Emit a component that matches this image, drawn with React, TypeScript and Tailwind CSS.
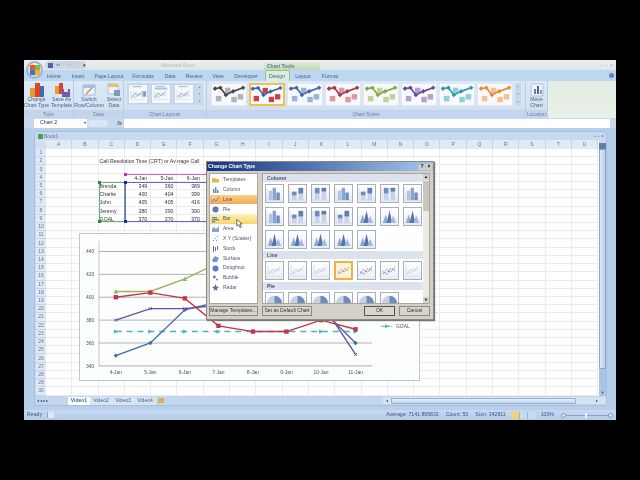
import React from "react"

const font = "font-['Liberation_Sans',Arial,sans-serif]"
const columns = "ABCDEFGHIJKLMNOPQRSTU".split("")
const rows = Array.from({ length: 30 }, (_, i) => i + 1)

const cells: Record<string, { text: string; right?: boolean }> = {
    C2: { text: "Call Resolution Time (CRT) or Average Call" },
    D4: { text: "4-Jan", right: true },
    E4: { text: "5-Jan", right: true },
    F4: { text: "6-Jan", right: true },
    C5: { text: "Brenda" },
    D5: { text: "349", right: true },
    E5: { text: "360", right: true },
    F5: { text: "389", right: true },
    C6: { text: "Charlie" },
    D6: { text: "400", right: true },
    E6: { text: "404", right: true },
    F6: { text: "399", right: true },
    C7: { text: "John" },
    D7: { text: "405", right: true },
    E7: { text: "405", right: true },
    F7: { text: "416", right: true },
    C8: { text: "Jeremy" },
    D8: { text: "380", right: true },
    E8: { text: "390", right: true },
    F8: { text: "390", right: true },
    C9: { text: "GOAL" },
    D9: { text: "370", right: true },
    E9: { text: "370", right: true },
    F9: { text: "370", right: true },
}

const tabs = [
    ["Home", 54],
    ["Insert", 78],
    ["Page Layout", 109],
    ["Formulas", 143],
    ["Data", 170],
    ["Review", 194],
    ["View", 218],
    ["Developer", 246],
    ["Design", 277],
    ["Layout", 303],
    ["Format", 330],
] as const

const styleThumbs = [
    { line: "#4a4a4a", box: "#b4b4b4" },
    { line: "#3566a8", box: "#c8404a" },
    { line: "#4668a8", box: "#9fb2dc" },
    { line: "#a83a44", box: "#dc9aa0" },
    { line: "#8aa548", box: "#c2d09c" },
    { line: "#6a4a94", box: "#b4a2cc" },
    { line: "#2f9aae", box: "#92cfdc" },
    { line: "#e88a34", box: "#f6bf96" },
]

const chartTypes = [
    "Templates",
    "Column",
    "Line",
    "Pie",
    "Bar",
    "Area",
    "X Y (Scatter)",
    "Stock",
    "Surface",
    "Doughnut",
    "Bubble",
    "Radar",
]

const xs = [114, 149, 184, 218, 253, 287, 322, 357]
const y = (v: number) => 366.7 - ((v - 340) / 20) * 23.2

const series = [
    { color: "#3f6fb0", values: [349, 360, 389, 396, 405, 400, 390, 360], shape: "diamond" },
    { color: "#9cb45a", values: [405, 405, 416, 430, 440, 445, 440, 430], shape: "triangle" },
    { color: "#6f4b9c", values: [380, 390, 390, 393, 410, 405, 396, 350], shape: "x" },
    { color: "#c4344a", values: [400, 404, 399, 375, 370, 370, 380, 372], shape: "square" },
]

const Marker = ({ x, y, color, shape }: { x: number; y: number; color: string; shape: string }) => {
    if (shape === "square") return <rect x={x - 2.2} y={y - 2.2} width={4.4} height={4.4} fill={color} />
    if (shape === "triangle") return <polygon points={`${x},${y - 2.4} ${x + 2.4},${y + 2} ${x - 2.4},${y + 2}`} fill={color} />
    if (shape === "diamond") return <polygon points={`${x},${y - 2.2} ${x + 2.2},${y} ${x},${y + 2.2} ${x - 2.2},${y}`} fill={color} />
    return <path d={`M${x - 1.5} ${y - 1.5}L${x + 1.5} ${y + 1.5}M${x + 1.5} ${y - 1.5}L${x - 1.5} ${y + 1.5}`} stroke={color} strokeWidth={1} />
}

const StyleThumb = ({ line, box, selected }: { line: string; box: string; selected?: boolean }) => (
    <div
        className={`flex h-[23px] w-[36px] shrink-0 items-center justify-center bg-[#f7f9fc] ${selected ? "border-2 border-[#f0c050]" : "border border-[#dfe8f3]"}`}
    >
        <svg viewBox="0 0 36 22" className="h-[20px] w-[33px]">
            {[[6, 14], [16, 5], [23, 15], [30, 12]].map(([x, b]) => (
                <rect key={x} x={x - 3} y={b - 2} width={6} height={6} fill={box} />
            ))}
            <polyline points="2,4 8,3 14,11 22,7 33,3" fill="none" stroke={line} strokeWidth={1.8} />
            {[[2, 4], [8, 3], [14, 11], [22, 7], [33, 3]].map(([x, b]) => (
                <polygon key={x} points={`${x},${b - 2.5} ${x + 2.5},${b} ${x},${b + 2.5} ${x - 2.5},${b}`} fill={line} />
            ))}
        </svg>
    </div>
)

const LayoutThumb = ({ variant }: { variant: number }) => (
    <div className="flex h-[20px] w-[20px] shrink-0 items-center justify-center border border-[#c4d3e6] bg-[#f4f7fb]">
        <svg viewBox="0 0 20 20" className="h-[18px] w-[18px]">
            <rect x={4} y={1} width={10} height={1.5} fill="#b8c4d4" />
            {variant === 0 && <rect x={15} y={7} width={4} height={6} fill="#7c9ac8" />}
            {variant === 1 && <rect x={3} y={3} width={14} height={2} fill="#aebfd8" />}
            <path d="M2 6V16H17M2 9H17M2 12H17" fill="none" stroke="#d3d9e0" strokeWidth={0.6} />
            <polyline points="3,14 7,9 10,12 15,7" fill="none" stroke="#7f8fa8" strokeWidth={0.8} />
            <polyline points="3,12 7,14 11,10 15,11" fill="none" stroke="#a8b6c8" strokeWidth={0.7} />
        </svg>
    </div>
)

const RibbonGroup = ({ label, width, children }: { label: string; width: string; children: React.ReactNode }) => (
    <div className={`flex shrink-0 flex-col border-r border-[#b9cde5] ${width}`}>
        <div className="flex h-[27px] items-start justify-center gap-[2px] pt-[2px]">{children}</div>
        <div className="mt-auto h-[8px] bg-[#c3d5eb] text-center text-[5px] leading-[8px] text-[#6a83a4]">{label}</div>
    </div>
)

const RibbonButton = ({ lines, width, icon }: { lines: string[]; width: string; icon: React.ReactNode }) => (
    <div className={`flex flex-col items-center text-[5.2px] leading-[5.6px] text-[#48648a] ${width}`}>
        <div className="h-[14px]">{icon}</div>
        {lines.map(line => (
            <span key={line} className="whitespace-nowrap">{line}</span>
        ))}
    </div>
)

type ThumbKind = "clustered" | "stacked" | "full" | "cone" | "line" | "marker" | "pie"

const ThumbDrawing = ({ kind }: { kind: ThumbKind }) => (
    <svg viewBox="0 0 18 18" className="h-full w-full">
        {kind === "clustered" && (
            <g>
                <path d="M1 3V16H17" fill="none" stroke="#bcc8d8" strokeWidth={0.5} />
                <rect x={3} y={6} width={3.6} height={10} fill="#b2c4e2" />
                <rect x={7} y={3} width={3.6} height={13} fill="#8aa4d0" />
                <rect x={11} y={8} width={3.6} height={8} fill="#6f8cc0" />
            </g>
        )}
        {kind === "stacked" && (
            <g>
                <path d="M1 3V16H17" fill="none" stroke="#bcc8d8" strokeWidth={0.5} />
                <rect x={3} y={11} width={5} height={5} fill="#c6d3ea" />
                <rect x={3} y={7} width={5} height={4} fill="#6f8cc0" />
                <rect x={10} y={9} width={5} height={7} fill="#c6d3ea" />
                <rect x={10} y={3} width={5} height={6} fill="#5f7db6" />
            </g>
        )}
        {kind === "full" && (
            <g>
                <path d="M1 3V16H17" fill="none" stroke="#bcc8d8" strokeWidth={0.5} />
                <rect x={3} y={9} width={5} height={7} fill="#c6d3ea" />
                <rect x={3} y={3} width={5} height={6} fill="#6f8cc0" />
                <rect x={10} y={7} width={5} height={9} fill="#c6d3ea" />
                <rect x={10} y={3} width={5} height={4} fill="#5f7db6" />
            </g>
        )}
        {kind === "cone" && (
            <g>
                <polygon points="2,16 5,7 8,16" fill="#8ea8d4" />
                <polygon points="6,16 9,3 12,16" fill="#5474ac" />
                <polygon points="10,16 13,8 16,16" fill="#a4bade" />
            </g>
        )}
        {kind === "line" && (
            <g fill="none" strokeWidth={0.8}>
                <path d="M2 3V15H16" stroke="#d8dee6" />
                <polyline points="3,13 7,8 11,10 15,5" stroke="#b4c4d8" />
                <polyline points="3,10 7,12 11,7 15,9" stroke="#c6d2e0" />
            </g>
        )}
        {kind === "marker" && (
            <g fill="none" stroke="#33425c" strokeWidth={0.8} strokeDasharray="1 1">
                <polyline points="2,13 6,8 10,11 15,5" />
                <polyline points="2,10 6,13 10,7 15,9" />
            </g>
        )}
        {kind === "pie" && (
            <g>
                <circle cx={9} cy={11} r={8} fill="#c4d2e8" />
                <path d="M9 11V3A8 8 0 0 1 17 11Z" fill="#6f8cc0" />
            </g>
        )}
    </svg>
)

const Thumb = ({ kind, selected }: { kind: ThumbKind; selected?: boolean }) => (
    <div
        className={`h-[19px] w-[19px] shrink-0 ${selected ? "border-2 border-[#eeb04a] bg-[#fdf3d8]" : "border border-[#a8afba] bg-linear-to-b from-[#ffffff] to-[#e8edf5]"}`}
    >
        <ThumbDrawing kind={kind} />
    </div>
)

const Section = ({ title }: { title: string }) => (
    <div className="h-[8px] bg-[#dce3ef] pl-[4px] text-[5.2px] font-bold leading-[8px] text-[#3c5276]">{title}</div>
)

const TypeIcon = ({ name }: { name: string }) => (
    <svg viewBox="0 0 7 7" className="h-[7px] w-[7px] shrink-0">
        {name === "Templates" && <path d="M0 2H3L4 3H7V6.5H0Z" fill="#e6bd45" />}
        {name === "Column" && <path d="M1 7V3H2.5V7ZM3 7V1H4.5V7ZM5 7V4H6.5V7Z" fill="#6c88b8" />}
        {name === "Line" && <polyline points="0,6 2,3 4,5 7,1" fill="none" stroke="#6c7fa0" strokeWidth={0.9} />}
        {(name === "Pie" || name === "Doughnut") && <circle cx={3.5} cy={3.5} r={3} fill="#5a7cb8" />}
        {name === "Bar" && <path d="M0 1H5V2.5H0ZM0 3H7V4.5H0ZM0 5H3V6.5H0Z" fill="#6c88b8" />}
        {name === "Area" && <path d="M0 7V4L2 2L4 4L7 1V7Z" fill="#8aa4cc" />}
        {name === "X Y (Scatter)" && <path d="M1 5h1v1H1ZM3 3h1v1H3ZM5 1h1v1H5ZM4 5h1v1H4Z" fill="#7a8fb0" />}
        {name === "Stock" && <path d="M1 1H2V7H1ZM3 2H4V6H3ZM5 1H6V5H5Z" fill="#5a7298" />}
        {name === "Surface" && <path d="M0 5L3 1L7 3L5 7L1 7Z" fill="#7a94bc" />}
        {name === "Bubble" && <path d="M1 3a1.4 1.4 0 1 0 2.8 0a1.4 1.4 0 1 0-2.8 0M4 5.5a1 1 0 1 0 2 0a1 1 0 1 0-2 0" fill="#5a7cb8" />}
        {name === "Radar" && <polygon points="3.5,0 4.5,2.5 7,3 5,4.5 5.5,7 3.5,5.5 1.5,7 2,4.5 0,3 2.5,2.5" fill="#5a7298" />}
    </svg>
)

const DialogButton = ({ label, width, strong }: { label: string; width: string; strong?: boolean }) => (
    <div
        className={`flex h-[10px] items-center justify-center whitespace-nowrap bg-[#d8d5cc] text-[5px] text-[#333] ${width} ${strong ? "border border-[#555]" : "border border-[#8c8a82]"}`}
    >
        {label}
    </div>
)

const ChartDialog = () => (
    <div className="absolute left-[182px] top-[101px] flex h-[159px] w-[228px] flex-col border border-[#8a887f] bg-[#d4d0c8] shadow-[1px_1px_1px_#777]">
        <div className="flex h-[9px] items-center justify-between bg-linear-to-r from-[#14337c] to-[#a8c6ec] pl-[1px] pr-[1px]">
            <span className="text-[5.2px] font-bold text-white">Change Chart Type</span>
            <div className="flex gap-[1px]">
                <div className="flex h-[6px] w-[6px] items-center justify-center bg-[#d4d0c8] text-[5px] font-bold leading-none text-black">?</div>
                <div className="flex h-[6px] w-[6px] items-center justify-center bg-[#d4d0c8] text-[5px] font-bold leading-none text-black">×</div>
            </div>
        </div>
        <div className="flex gap-[4px] pl-[2px] pr-[3px] pt-[2px]">
            <div className="h-[131px] w-[49px] border border-[#a9a69c] bg-white pt-[1px]">
                {chartTypes.map(name => (
                    <div
                        key={name}
                        className={`flex h-[9.8px] items-center gap-[4px] pl-[2px] text-[5px] text-[#4a566a] ${name === "Line" ? "bg-linear-to-b from-[#fbd08c] to-[#f5a84c]" : name === "Bar" ? "bg-linear-to-b from-[#fdf0b8] to-[#fad868]" : ""}`}
                    >
                        <TypeIcon name={name} />
                        <span className="whitespace-nowrap">{name}</span>
                    </div>
                ))}
            </div>
            <div className="flex h-[131px] w-[168px] border border-[#a9a69c] bg-white">
                <div className="flex-1 overflow-hidden">
                    <Section title="Column" />
                    <div className="grid grid-cols-[repeat(7,19px)] gap-x-[4px] gap-y-[4px] pb-[2px] pl-[2px] pt-[2px]">
                        {(["clustered", "stacked", "full", "clustered", "stacked", "full", "clustered"] as const).map((k, i) => <Thumb key={i} kind={k} />)}
                        {(["clustered", "stacked", "full", "stacked"] as const).map((k, i) => <Thumb key={i} kind={k} />)}
                        {Array.from({ length: 8 }).map((_, i) => <Thumb key={i} kind="cone" />)}
                    </div>
                    <Section title="Line" />
                    <div className="flex gap-[4px] py-[2px] pl-[2px]">
                        {Array.from({ length: 7 }).map((_, i) => <Thumb key={i} kind={i >= 3 && i < 6 ? "marker" : "line"} selected={i === 3} />)}
                    </div>
                    <Section title="Pie" />
                    <div className="flex gap-[4px] pl-[2px] pt-[2px]">
                        {Array.from({ length: 6 }).map((_, i) => <Thumb key={i} kind="pie" />)}
                    </div>
                </div>
                <div className="flex w-[6px] flex-col bg-[#ecebe4]">
                    <div className="h-[6px] bg-[#d4d0c8] text-center text-[4px] leading-[6px] text-black">▲</div>
                    <div className="mt-[1px] h-[30px] bg-[#c8c5bc]" />
                    <div className="mt-auto h-[6px] bg-[#d4d0c8] text-center text-[4px] leading-[6px] text-black">▼</div>
                </div>
            </div>
        </div>
        <div className="flex items-center pl-[2px] pt-[2px]">
            <DialogButton label="Manage Templates..." width="w-[49px]" />
            <div className="w-[4px]" />
            <DialogButton label="Set as Default Chart" width="w-[50px]" />
            <div className="w-[52px]" />
            <DialogButton label="OK" width="w-[31px]" strong />
            <div className="w-[4px]" />
            <DialogButton label="Cancel" width="w-[31px]" />
        </div>
        <svg viewBox="0 0 14 20" className="absolute left-[29px] top-[57px] h-[9px] w-[7px]">
            <path d="M1 1V16L5 12L8 19L11 18L8 11H13Z" fill="#fff" stroke="#000" strokeWidth={1.2} />
        </svg>
    </div>
)

const ChartBox = () => (
    <svg
        viewBox="79 233 341 148"
        className="absolute left-[55px] top-[173px] h-[148px] w-[341px] border border-[#b5c9d8] bg-[#fcfdfd]"
    >
        {[440, 420, 400, 380, 360, 340].map(v => (
            <g key={v}>
                <line x1={97} x2={374} y1={y(v)} y2={y(v)} stroke="#a8a8a8" strokeWidth={0.9} />
                <text x={92} y={y(v) + 2} textAnchor="end" fontSize={5} fill="#555">{v}</text>
            </g>
        ))}
        <line x1={97} x2={97} y1={240} y2={367} stroke="#b0b0b0" strokeWidth={0.7} />
        {xs.map((x, i) => (
            <text key={x} x={x} y={374.5} textAnchor="middle" fontSize={5} fill="#555">{`${i + 4}-Jan`}</text>
        ))}
        <polyline
            points={xs.map(x => `${x},${y(370)}`).join(" ")}
            fill="none"
            stroke="#4fb3bd"
            strokeWidth={1.6}
            strokeDasharray="6 5"
        />
        {xs.map(x => <polygon key={x} points={`${x - 2},${y(370) - 2.2} ${x + 2.4},${y(370)} ${x - 2},${y(370) + 2.2}`} fill="#4fb3bd" />)}
        {series.map(s => (
            <g key={s.color}>
                <polyline
                    points={s.values.map((v, i) => `${xs[i]},${y(v)}`).join(" ")}
                    fill="none"
                    stroke={s.color}
                    strokeWidth={1.4}
                />
                {s.values.map((v, i) => <Marker key={i} x={xs[i]} y={y(v)} color={s.color} shape={s.shape} />)}
            </g>
        ))}
        <line x1={383} x2={394} y1={326.5} y2={326.5} stroke="#4fb3bd" strokeWidth={1.2} strokeDasharray="4 1" />
        <polygon points="387,324.5 391,326.5 387,328.5" fill="#4fb3bd" />
        <text x={398} y={328.5} fontSize={5} fill="#555">GOAL</text>
    </svg>
)

const Handle = ({ className }: { className: string }) => <div className={`absolute h-[3px] w-[3px] ${className}`} />

const App = () => (
    <div className={`flex h-[480px] w-[640px] items-center justify-center overflow-hidden bg-black ${font}`}>
        <div className="relative flex h-[360px] w-[592px] flex-col overflow-hidden bg-[#b7cfeb] blur-[0.45px]">
            <div className="relative h-[10px] shrink-0 bg-linear-to-b from-[#eef0f2] to-[#dfe4e6]">
                <div className="absolute left-[21px] top-[1px] flex h-[8px] w-[41px] items-center gap-[3px] rounded-full bg-[#ccd6e2] pl-[3px] text-[5px] leading-none text-[#4a5c9c]">
                    <span className="h-[5px] w-[5px] bg-[#5060a8]" />
                    <span>↶</span>
                    <span className="text-[#a8b0bc]">·</span>
                    <span className="text-[#a8b0bc]">↷</span>
                    <span className="text-[#a8b0bc]">·</span>
                    <span className="ml-[4px] text-[#333]">▾</span>
                </div>
                <span className="absolute left-[137px] top-[2px] text-[5px] leading-[6px] text-[#b0b7be]">Microsoft Excel</span>
                <div className="absolute left-[240px] top-[2px] h-[8px] w-[56px] bg-linear-to-b from-[#dfeadb] to-[#bfdcb2] pl-[3px] text-[5px] font-bold leading-[8px] text-[#5c7a8a]">Chart Tools</div>
                <div className="absolute right-[3px] top-[3px] flex gap-[3px] text-[5px] leading-none text-[#a0a8b0]">
                    <span>–</span>
                    <span>▫</span>
                    <span>×</span>
                </div>
            </div>
            <div className="relative h-[11px] shrink-0 bg-[#bdd7f1]">
                <div className="absolute left-[241px] top-0 h-[11px] w-[25px] rounded-t-[2px] border-x border-t border-[#9cc08c] bg-[#dbeede]" />
                {tabs.map(([name, x]) => (
                    <span key={name} className="absolute top-[2px] -translate-x-1/2 whitespace-nowrap text-[5.2px] leading-[8px] text-[#48648a]" style={{ left: x - 24 }}>
                        {name}
                    </span>
                ))}
                <div className="absolute right-[2px] top-[3px] h-[5px] w-[5px] rounded-full bg-[#5c84c4]" />
            </div>
            <div className="flex h-[37px] shrink-0 bg-[#e4ede6]">
                <div className="flex flex-1 bg-linear-to-b from-[#dce8f5] to-[#cfdff1]">
                    <RibbonGroup label="Type" width="w-[50px]">
                        <RibbonButton
                            lines={["Change", "Chart Type"]}
                            width="w-[24px]"
                            icon={
                                <svg viewBox="0 0 16 14" className="h-[14px] w-[16px]">
                                    <rect x={1} y={5} width={5} height={9} fill="#e89a2c" />
                                    <rect x={6} y={0} width={5} height={14} fill="#d8442c" />
                                    <rect x={11} y={3} width={4} height={11} fill="#3f6cb8" />
                                </svg>
                            }
                        />
                        <RibbonButton
                            lines={["Save As", "Template"]}
                            width="w-[22px]"
                            icon={
                                <svg viewBox="0 0 16 14" className="h-[14px] w-[16px]">
                                    <rect x={1} y={3} width={4} height={8} fill="#e89a2c" />
                                    <rect x={5} y={0} width={4} height={11} fill="#d8442c" />
                                    <rect x={8} y={6} width={8} height={8} fill="#6c5ca4" />
                                    <rect x={10} y={6} width={4} height={3} fill="#e0e0f0" />
                                </svg>
                            }
                        />
                    </RibbonGroup>
                    <RibbonGroup label="Data" width="w-[50px]">
                        <RibbonButton
                            lines={["Switch", "Row/Column"]}
                            width="w-[29px]"
                            icon={
                                <svg viewBox="0 0 14 14" className="h-[14px] w-[14px]">
                                    <rect x={1} y={2} width={12} height={10} fill="#eef3f9" stroke="#7f98b8" strokeWidth={0.6} />
                                    <rect x={1} y={2} width={12} height={3} fill="#a8c0de" />
                                    <path d="M4 11L10 5" stroke="#d88830" strokeWidth={1.2} />
                                </svg>
                            }
                        />
                        <RibbonButton
                            lines={["Select", "Data"]}
                            width="w-[17px]"
                            icon={
                                <svg viewBox="0 0 14 14" className="h-[14px] w-[14px]">
                                    <rect x={1} y={1} width={10} height={10} fill="#eef3f9" stroke="#8fa5c0" strokeWidth={0.6} />
                                    <rect x={1} y={1} width={10} height={3} fill="#e8c070" />
                                    <rect x={7} y={7} width={6} height={6} fill="#8098c0" />
                                </svg>
                            }
                        />
                    </RibbonGroup>
                    <RibbonGroup label="Chart Layouts" width="w-[83px]">
                        <div className="flex items-start gap-[3px] bg-[#c8d9ee] px-[1px] py-[1px]">
                            <LayoutThumb variant={0} />
                            <LayoutThumb variant={1} />
                            <LayoutThumb variant={2} />
                            <div className="flex h-[20px] w-[5px] flex-col justify-between text-center text-[3px] leading-[6px] text-[#7f93ad]">
                                <span>▲</span>
                                <span>▼</span>
                                <span>▼</span>
                            </div>
                        </div>
                    </RibbonGroup>
                    <RibbonGroup label="Chart Styles" width="w-[319px]">
                        <div className="flex items-start gap-[2px]">
                            {styleThumbs.map((t, i) => (
                                <StyleThumb key={t.line} line={t.line} box={t.box} selected={i === 1} />
                            ))}
                            <div className="flex h-[23px] w-[6px] flex-col justify-between bg-[#c8d9ee] text-center text-[3px] leading-[7px] text-[#7f93ad]">
                                <span>▲</span>
                                <span>▼</span>
                                <span>▼</span>
                            </div>
                        </div>
                    </RibbonGroup>
                    <RibbonGroup label="Location" width="w-[22px]">
                        <RibbonButton
                            lines={["Move", "Chart"]}
                            width="w-[20px]"
                            icon={
                                <svg viewBox="0 0 14 14" className="h-[14px] w-[14px]">
                                    <rect x={1} y={1} width={12} height={12} rx={1} fill="#f0f5fb" stroke="#8fa5c0" strokeWidth={0.6} />
                                    <rect x={4} y={6} width={2} height={5} fill="#6080b0" />
                                    <rect x={7} y={3} width={2} height={8} fill="#4a6898" />
                                    <rect x={10} y={7} width={2} height={4} fill="#8098c0" />
                                </svg>
                            }
                        />
                    </RibbonGroup>
                </div>
                <div className="w-[68px] bg-linear-to-b from-[#e2ece2] to-[#eaf1ea]" />
            </div>
            <div className="flex h-[10px] shrink-0 items-center bg-[#c6d9ef] pl-[10px] pr-[6px]">
                <div className="flex h-[9px] w-[53px] items-center justify-between bg-white pl-[6px] pr-[1px] text-[5.2px] text-[#333]">
                    <span>Chart 2</span>
                    <span className="text-[4px] leading-none">▾</span>
                </div>
                <div className="flex h-[9px] w-[37px] items-center justify-between pl-[1px] pr-[2px]">
                    <span className="h-[7px] w-[20px] rounded-full bg-[#dbe6f3]" />
                    <span className="text-[6px] italic text-[#333]">fx</span>
                </div>
                <div className="h-[9px] flex-1 bg-white" />
            </div>
            <div className="flex min-h-0 flex-1 flex-col pb-[4px] pl-[10px] pr-[9px] pt-[3px]">
                <div className="flex min-h-0 flex-1 flex-col rounded-t-[3px] border border-[#a5c0de] bg-[#c8daef]">
                    <div className="flex h-[8px] shrink-0 items-center justify-between pl-[3px] pr-[2px] text-[5px] leading-none text-[#5c789c]">
                        <span className="flex items-center gap-[1px]">
                            <span className="h-[5px] w-[5px] bg-[#4f9d5c]" />
                            Book1
                        </span>
                        <span className="text-[5px]">– ▫ ×</span>
                    </div>
                    <div className="flex min-h-0 flex-1 pl-[1px]">
                        <div className="grid flex-1 auto-rows-[8.23px] grid-cols-[10px_repeat(21,26.3px)] grid-rows-[9px] content-start overflow-hidden bg-white">
                            <div className="bg-[#d2dfee]" />
                            {columns.map(col => (
                                <div key={col} className="flex items-center justify-center border-r border-[#c4d3e5] bg-[#e0e9f4] text-[5px] leading-none text-[#5c7498]">{col}</div>
                            ))}
                            {rows.map(row => (
                                <React.Fragment key={row}>
                                    <div className="flex items-center justify-center border-b border-[#c4d3e5] bg-[#e0e9f4] text-[5px] leading-none text-[#5c7498]">{row}</div>
                                    {columns.map(col => {
                                        const cell = cells[`${col}${row}`]
                                        return (
                                            <div
                                                key={col}
                                                className={`whitespace-nowrap border-b border-r border-[#eaecef] pr-[3px] text-[5.2px] leading-[8px] text-[#333] ${cell?.right ? "text-right" : "pl-[1px]"}`}
                                            >
                                                {cell?.text}
                                            </div>
                                        )
                                    })}
                                </React.Fragment>
                            ))}
                        </div>
                        <div className="flex w-[7px] shrink-0 flex-col bg-[#a9c4e5]">
                            <div className="h-[3px] bg-[#c8daef]" />
                            <div className="h-[6px] bg-[#5f7fa8]" />
                            <div className="h-[220px] border border-[#8aa6cc] bg-linear-to-r from-[#dbe7f4] to-[#bcd2ea]" />
                            <div className="mt-auto h-[6px] text-center text-[4px] leading-[6px] text-[#3e5a7d]">▼</div>
                        </div>
                    </div>
                    <div className="flex h-[9px] shrink-0 items-center bg-[#c2d6ee] pl-[1px]">
                        <div className="flex w-[32px] items-center gap-[1px] pl-[1px] text-[4px] leading-none text-[#27406a]">
                            <span>◂</span>
                            <span>◂</span>
                            <span>▸</span>
                            <span>▸</span>
                        </div>
                        {["Video1", "Video2", "Video3", "Video4"].map((name, i) => (
                            <span
                                key={name}
                                className={`flex h-[8px] w-[22px] items-center justify-center text-[5px] leading-none text-[#48648a] ${i === 0 ? "bg-white font-bold" : "bg-[#d7e4f3]"}`}
                            >
                                {name}
                            </span>
                        ))}
                        <span className="ml-[2px] h-[5px] w-[6px] bg-[#e0b050]" />
                        <div className="ml-auto flex h-[7px] w-[223px] items-center bg-[#d4e2f2] pr-[8px]">
                            <span className="w-[8px] text-center text-[4px] leading-none text-[#27406a]">◂</span>
                            <div className="h-[6px] w-[185px] border border-[#9ab4d4] bg-linear-to-b from-[#e8f0f8] to-[#c0d4ea]" />
                            <span className="ml-auto text-[4px] leading-none text-[#27406a]">▸</span>
                        </div>
                    </div>
                </div>
            </div>
            <div className="flex h-[10px] shrink-0 items-center bg-linear-to-b from-[#c6d9f0] to-[#b4cce9] pl-[3px] text-[5.2px] leading-none text-[#3a5680]">
                <span>Ready</span>
                <span className="ml-[5px] h-[6px] w-[7px] border-l border-[#8aa6cc] bg-[#dfe8f2]" />
                <span className="ml-auto">Average: 7141.895833</span>
                <span className="ml-[7px]">Count: 53</span>
                <span className="ml-[7px]">Sum: 342811</span>
                <div className="ml-[5px] flex h-[7px] w-[25px]">
                    <span className="w-[8px] bg-[#f5d070]" />
                    <span className="w-[8px] border-l border-[#9ab4d4] bg-[#c8daef]" />
                    <span className="w-[9px] border-l border-[#9ab4d4] bg-[#c8daef]" />
                </div>
                <span className="ml-[5px]">100%</span>
                <div className="relative ml-[7px] mr-[3px] flex h-[7px] w-[52px] items-center">
                    <div className="h-[1px] w-full bg-[#8aa6cc]" />
                    <span className="absolute left-0 h-[5px] w-[5px] rounded-full border border-[#7f93ad] bg-[#e2ebf5]" />
                    <span className="absolute left-[24px] h-[5px] w-[2px] bg-[#eef3f8]" />
                    <span className="absolute right-0 h-[5px] w-[5px] rounded-full border border-[#7f93ad] bg-[#e2ebf5]" />
                </div>
            </div>

            <div className="absolute left-[75px] top-[122px] h-[40px] w-[26px] border border-[#6aad74]" />
            <div className="absolute left-[101px] top-[114px] h-[8px] w-[110px] border-t border-[#c86ac8]" />
            <div className="absolute left-[101px] top-[122px] h-[40px] w-[110px] border-y border-l border-[#6f60dc]" />
            <Handle className="left-[74px] top-[121px] bg-[#2d8a3c]" />
            <Handle className="left-[74px] top-[160px] bg-[#2d8a3c]" />
            <Handle className="left-[100px] top-[113px] bg-[#b040b0]" />
            <Handle className="left-[100px] top-[121px] bg-[#2020c0]" />
            <Handle className="left-[100px] top-[160px] bg-[#2020c0]" />

            <ChartBox />
            <ChartDialog />

            <div className="absolute left-[2px] top-[1px] flex h-[18px] w-[17px] items-center justify-center rounded-full border-2 border-[#9fb4cc] bg-linear-to-b from-[#f0f4f8] to-[#c0d0e2]">
                <div className="grid h-[10px] w-[10px] grid-cols-2 rounded-[2px]">
                    <span className="bg-[#e8542c]" />
                    <span className="bg-[#8ab83c]" />
                    <span className="bg-[#3c78c8]" />
                    <span className="bg-[#f0b030]" />
                </div>
            </div>
        </div>
    </div>
)

export default App
